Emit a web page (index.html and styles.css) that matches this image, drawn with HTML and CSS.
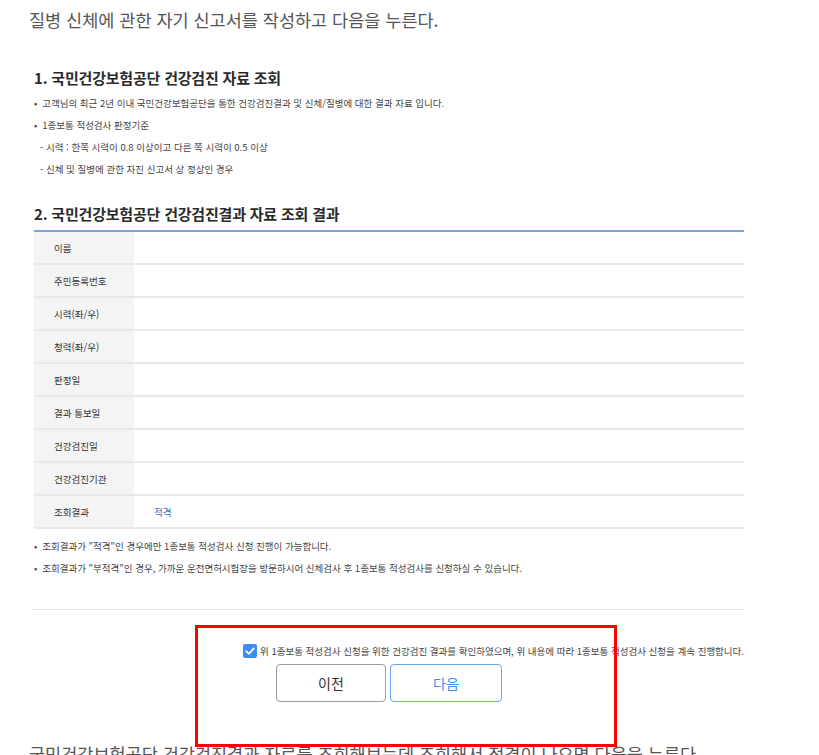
FILE: index.html
```html
<!DOCTYPE html>
<html lang="ko">
<head>
  <meta charset="UTF-8" />
  <title>1종보통 적성검사</title>
  <link rel="stylesheet" href="styles.css">
</head>
<body>

  <div class="page">
    <p class="step">질병 신체에 관한 자기 신고서를 작성하고 다음을 누른다.</p>

    <div class="capture">
      <h3 class="sec-title first">1. 국민건강보험공단 건강검진 자료 조회</h3>
      <ul class="dots">
        <li>고객님의 최근 2년 이내 국민건강보험공단을 통한 건강검진결과 및 신체/질병에 대한 결과 자료 입니다.</li>
        <li>1종보통 적성검사 판정기준</li>
        <li class="dash">- 시력 : 한쪽 시력이 0.8 이상이고 다른 쪽 시력이 0.5 이상</li>
        <li class="dash">- 신체 및 질병에 관한 자진 신고서 상 정상인 경우</li>
      </ul>

      <h3 class="sec-title">2. 국민건강보험공단 건강검진결과 자료 조회 결과</h3>
      <table class="result">
        <tr><th>이름</th><td></td></tr>
        <tr><th>주민등록번호</th><td></td></tr>
        <tr><th>시력(좌/우)</th><td></td></tr>
        <tr><th>청력(좌/우)</th><td></td></tr>
        <tr><th>판정일</th><td></td></tr>
        <tr><th>결과 통보일</th><td></td></tr>
        <tr><th>건강검진일</th><td></td></tr>
        <tr><th>건강검진기관</th><td></td></tr>
        <tr><th>조회결과</th><td class="ok">적격</td></tr>
      </table>

      <ul class="dots notes">
        <li>조회결과가 "적격"인 경우에만 1종보통 적성검사 신청 진행이 가능합니다.</li>
        <li>조회결과가 "부적격"인 경우, 가까운 운전면허시험장을 방문하시어 신체검사 후 1종보통 적성검사를 신청하실 수 있습니다.</li>
      </ul>

      <hr class="divider">

      <div class="actions">
        <label class="agree">
          <span class="check">
            <svg viewBox="0 0 14 14" width="14" height="14"><path d="M3.2 7.2 L5.9 9.8 L10.8 4.4" fill="none" stroke="#fff" stroke-width="1.8" stroke-linecap="round" stroke-linejoin="round"/></svg>
          </span>
          위 1종보통 적성검사 신청을 위한 건강검진 결과를 확인하였으며, 위 내용에 따라 1종보통 적성검사 신청을 계속 진행합니다.
        </label>

        <div class="buttons">
          <button class="btn">이전</button>
          <button class="btn btn-next">다음</button>
        </div>

        <div class="highlight"></div>
      </div>
    </div>

    <p class="step step-bottom">국민건강보험공단 건강검진결과 자료를 조회해보는데 조회해서 적격이 나오면 다음을 누른다.</p>
  </div>

</body>
</html>
```

FILE: styles.css
```css
* {
  box-sizing: border-box;
}

body {
  margin: 0;
  font-family: "Noto Sans CJK KR", "Noto Sans", sans-serif;
  background-color: #ffffff;
  color: #333;
  overflow: hidden;
}

.page {
  padding: 8px 0 0 29px;
  height: 755px;
  overflow: hidden;
}

.step {
  margin: 0;
  font-size: 17.5px;
  line-height: 24px;
  color: #555;
  white-space: nowrap;
}

.step-bottom {
  margin-top: 40px;
}

.capture {
  width: 710px;
  margin-left: 5px;
}

.sec-title {
  margin: 24px 0 0;
  font-size: 15px;
  line-height: 20px;
  font-weight: 700;
  color: #2a2a2a;
  letter-spacing: -0.2px;
}

.sec-title.first {
  margin-top: 36px;
}

.dots {
  list-style: none;
  margin: 4px 0 0;
  padding: 0;
  font-size: 9.5px;
  line-height: 22px;
  color: #444;
}

.dots li::before {
  content: "•";
  margin-right: 5px;
}

.dots li.dash {
  padding-left: 6px;
}

.dots li.dash::before {
  content: none;
}

.result {
  width: 100%;
  margin-top: 6px;
  border-collapse: collapse;
  border-top: 2px solid #7ca2d9;
}

.result th,
.result td {
  height: 33px;
  padding: 0;
  border-bottom: 2px solid #e9e9e9;
  font-size: 9.5px;
  font-weight: normal;
  text-align: left;
  color: #333;
}

.result th {
  width: 100px;
  padding-left: 20px;
  background-color: #f4f4f4;
}

.result td {
  padding-left: 20px;
}

.result td.ok {
  color: #3a6fc4;
}

.notes {
  margin-top: 6px;
}

.divider {
  margin: 30px 0 0 -2px;
  border: none;
  border-top: 1px solid #e8e8e8;
}

.actions {
  position: relative;
  margin-top: 33px;
}

.agree {
  display: flex;
  justify-content: flex-end;
  align-items: center;
  gap: 3px;
  font-size: 9.5px;
  line-height: 16px;
  color: #444;
  white-space: nowrap;
}

.check {
  display: flex;
  width: 14px;
  height: 14px;
  border-radius: 2px;
  background-color: #3d8cf2;
}

.buttons {
  display: flex;
  justify-content: center;
  gap: 4px;
  margin-top: 5px;
}

.btn {
  width: 110px;
  height: 38px;
  border: 1px solid #9a9a9a;
  border-radius: 4px;
  background-color: #fff;
  font-family: inherit;
  font-size: 14px;
  color: #333;
}

.btn-next {
  width: 112px;
  border-color: #6aa8f2;
  color: #3d8cf2;
}

.highlight {
  position: absolute;
  left: 161px;
  top: -18px;
  width: 422px;
  height: 122px;
  border: 3px solid #ff0000;
  pointer-events: none;
}
```
